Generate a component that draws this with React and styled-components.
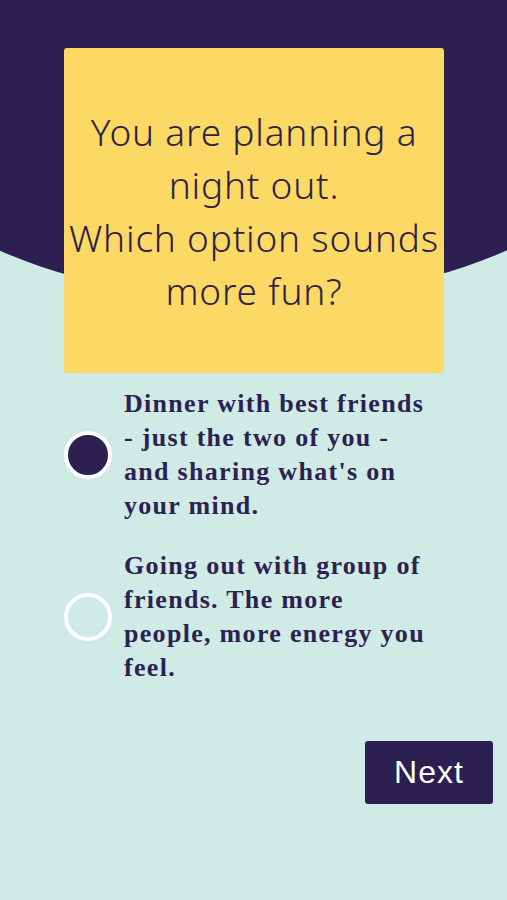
import React, { useState } from 'react';
import styled, { createGlobalStyle } from 'styled-components';

const GlobalStyle = createGlobalStyle`
  body {
    margin: 0;
    background: #d0ebe6;
  }
`;

const Page = styled.div`
  position: relative;
  min-height: 900px;
  overflow: hidden;
  padding-top: 48px;
  box-sizing: border-box;
`;

const Arc = styled.div`
  position: absolute;
  top: 0;
  left: -127px;
  width: 760px;
  height: 299px;
  background: #2c1f52;
  border-radius: 0 0 380px 380px / 0 0 190px 190px;
`;

const Content = styled.div`
  position: relative;
  padding: 0 63px 0 64px;
`;

const Card = styled.div`
  height: 325px;
  background: #fcd964;
  border-radius: 3px;
  display: flex;
  align-items: center;
  justify-content: center;
  text-align: center;
`;

const Question = styled.h1`
  margin: 0;
  font-family: 'Noto Sans', sans-serif;
  font-weight: 300;
  font-size: 37px;
  line-height: 53px;
  color: #2c2346;
  letter-spacing: 0.8px;
  white-space: nowrap;
`;

const Options = styled.div`
  margin-top: 14px;
  display: flex;
  flex-direction: column;
  gap: 26px;
`;

const Option = styled.label`
  display: flex;
  align-items: center;
  gap: 12px;
  cursor: pointer;
`;

const Radio = styled.span`
  flex: none;
  width: 48px;
  height: 48px;
  box-sizing: border-box;
  border: 4px solid #ffffff;
  border-radius: 50%;
  background: ${p => (p.$checked ? '#2c1f52' : 'transparent')};
`;

const OptionText = styled.span`
  font-family: 'Liberation Serif', serif;
  font-weight: 700;
  font-size: 26px;
  line-height: 34px;
  letter-spacing: 1.3px;
  color: #2c2150;
  white-space: nowrap;
`;

const Line = styled.span`
  display: block;
`;

const Footer = styled.div`
  display: flex;
  justify-content: flex-end;
  padding-right: 14px;
  margin-top: 56px;
`;

const NextButton = styled.button`
  width: 128px;
  height: 63px;
  border: none;
  border-radius: 3px;
  background: #2c1f52;
  color: #ffffff;
  font-family: 'Liberation Sans', sans-serif;
  font-size: 32px;
  letter-spacing: 1px;
  padding: 0;
  cursor: pointer;
`;

const options = [
  {
    id: 1,
    lines: ['Dinner with best friends', '- just the two of you -', "and sharing what's on", 'your mind.'],
  },
  {
    id: 2,
    lines: ['Going out with group of', 'friends. The more', 'people, more energy you', 'feel.'],
  },
];

export default () => {
  const [selected, setSelected] = useState(1);

  return (
    <>
      <GlobalStyle />
      <Page>
        <Arc />
        <Content>
          <Card>
            <Question>
              You are planning a<br />
              night out.<br />
              Which option sounds<br />
              more fun?
            </Question>
          </Card>
          <Options>
            {options.map(option => (
              <Option key={option.id} onClick={() => setSelected(option.id)}>
                <Radio $checked={selected === option.id} />
                <OptionText>
                  {option.lines.map(line => (
                    <Line key={line}>{line}</Line>
                  ))}
                </OptionText>
              </Option>
            ))}
          </Options>
        </Content>
        <Footer>
          <NextButton>Next</NextButton>
        </Footer>
      </Page>
    </>
  );
};
